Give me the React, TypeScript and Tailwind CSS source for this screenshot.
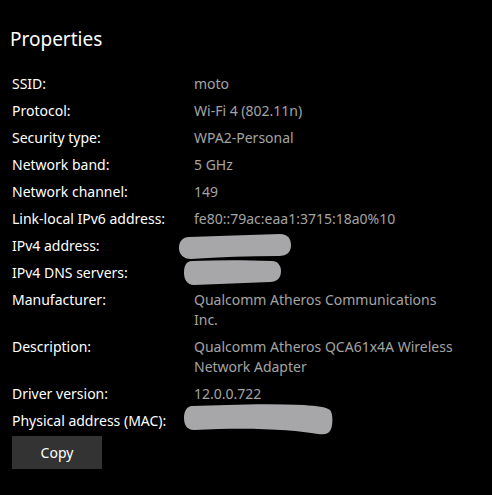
const rows: { label: string; value?: string[]; blob?: "ipv4" | "dns" | "mac" }[] = [
  { label: "SSID:", value: ["moto"] },
  { label: "Protocol:", value: ["Wi-Fi 4 (802.11n)"] },
  { label: "Security type:", value: ["WPA2-Personal"] },
  { label: "Network band:", value: ["5 GHz"] },
  { label: "Network channel:", value: ["149"] },
  { label: "Link-local IPv6 address:", value: ["fe80::79ac:eaa1:3715:18a0%10"] },
  { label: "IPv4 address:", blob: "ipv4" },
  { label: "IPv4 DNS servers:", blob: "dns" },
  { label: "Manufacturer:", value: ["Qualcomm Atheros Communications", "Inc."] },
  { label: "Description:", value: ["Qualcomm Atheros QCA61x4A Wireless", "Network Adapter"] },
  { label: "Driver version:", value: ["12.0.0.722"] },
  { label: "Physical address (MAC):", blob: "mac" },
];

// redaction scribbles drawn over the values
function Blob({ kind }: { kind: "ipv4" | "dns" | "mac" }) {
  if (kind === "ipv4")
    return (
      <svg className="absolute left-[-15px] top-[-2px]" width="112" height="25" viewBox="0 0 112 25">
        <path d="M10 3 C40 2 70 1 101 0 C109 0 112 5 112 11 C112 18 108 22 100 22 C70 22 40 23 12 25 C4 25 0 20 0 14 C0 7 4 3 10 3 Z" fill="#a7a7aa" />
      </svg>
    );
  if (kind === "dns")
    return (
      <svg className="absolute left-[-10px] top-[-3px]" width="97" height="25" viewBox="0 0 97 25">
        <path d="M8 1 C35 0 60 0 88 1 C94 1 97 6 97 11 C97 18 93 22 86 22 C60 23 35 24 10 25 C3 25 0 19 0 13 C0 6 2 1 8 1 Z" fill="#a7a7aa" />
      </svg>
    );
  return (
    <svg className="absolute left-[-10px] top-[-7px]" width="149" height="31" viewBox="0 0 149 31">
      <path d="M8 2 C40 1 80 -1 120 1 C133 2 142 3 146 6 C149 9 149 20 147 25 C145 30 140 31 134 30 C110 26 70 23 10 26 C3 26 0 21 0 14 C0 7 3 2 8 2 Z" fill="#a7a7aa" />
    </svg>
  );
}

export default function App() {
  return (
    <main className="h-[495px] w-[492px] overflow-hidden bg-black font-['Noto_Sans','Open_Sans',sans-serif] text-white">
      <h1 className="px-[10px] pt-[25px] text-[19px] font-normal leading-[28px]">Properties</h1>
      <div className="mt-[21px] grid grid-cols-[182px_1fr] gap-y-[7px] px-[12px] text-[14px] leading-[20px]">
        {rows.map((r) => (
          <div key={r.label} className="contents">
            <div>{r.label}</div>
            <div className="relative text-[#a4a4a4]">
              {r.value
                ? r.value.map((line) => <div key={line}>{line}</div>)
                : r.blob && (
                    <>
                      <div>&nbsp;</div>
                      <Blob kind={r.blob} />
                    </>
                  )}
            </div>
          </div>
        ))}
      </div>
      <button className="ml-[12px] mt-[5px] h-[33px] w-[90px] bg-[#333333] text-[14px] text-white">Copy</button>
    </main>
  );
}
